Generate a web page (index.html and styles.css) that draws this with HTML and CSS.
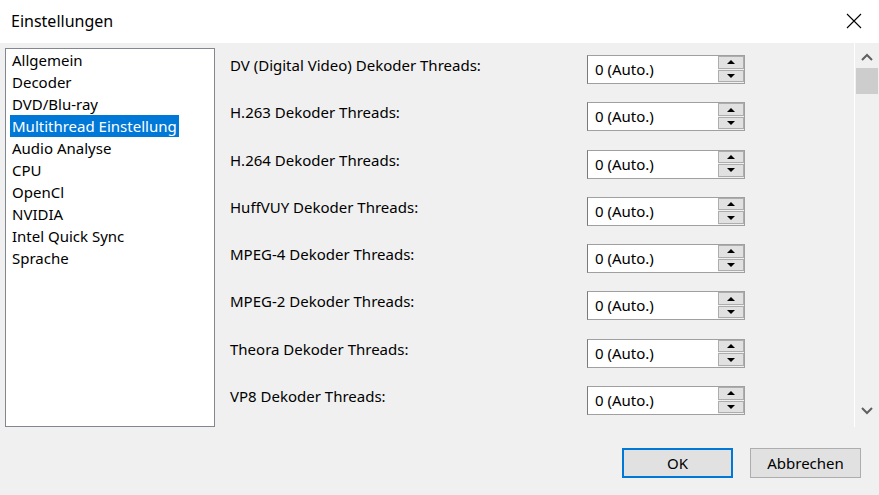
FILE: index.html
```html
<!DOCTYPE html>
<html lang="de">
<head>
  <meta charset="UTF-8">
  <title>Einstellungen</title>
  <link rel="stylesheet" href="styles.css">
</head>
<body>
  <div class="window">
    <div class="titlebar">
      <span class="title">Einstellungen</span>
      <svg class="close" width="16" height="16" viewBox="0 0 16 16">
        <path d="M1 1 L15 15 M15 1 L1 15" stroke="#000" stroke-width="1.1" fill="none"/>
      </svg>
    </div>

    <div class="body">
      <ul class="nav">
        <li><span>Allgemein</span></li>
        <li><span>Decoder</span></li>
        <li><span>DVD/Blu-ray</span></li>
        <li class="active"><span>Multithread Einstellung</span></li>
        <li><span>Audio Analyse</span></li>
        <li><span>CPU</span></li>
        <li><span>OpenCl</span></li>
        <li><span>NVIDIA</span></li>
        <li><span>Intel Quick Sync</span></li>
        <li><span>Sprache</span></li>
      </ul>

      <div class="pane">
        <div class="rows">
          <div class="row">
            <label>DV (Digital Video) Dekoder Threads:</label>
            <div class="spin"><div class="spin-value">0 (Auto.)</div><div class="spin-btns"><span class="up"></span><span class="down"></span></div></div>
          </div>
          <div class="row">
            <label>H.263 Dekoder Threads:</label>
            <div class="spin"><div class="spin-value">0 (Auto.)</div><div class="spin-btns"><span class="up"></span><span class="down"></span></div></div>
          </div>
          <div class="row">
            <label>H.264 Dekoder Threads:</label>
            <div class="spin"><div class="spin-value">0 (Auto.)</div><div class="spin-btns"><span class="up"></span><span class="down"></span></div></div>
          </div>
          <div class="row">
            <label>HuffVUY Dekoder Threads:</label>
            <div class="spin"><div class="spin-value">0 (Auto.)</div><div class="spin-btns"><span class="up"></span><span class="down"></span></div></div>
          </div>
          <div class="row">
            <label>MPEG-4 Dekoder Threads:</label>
            <div class="spin"><div class="spin-value">0 (Auto.)</div><div class="spin-btns"><span class="up"></span><span class="down"></span></div></div>
          </div>
          <div class="row">
            <label>MPEG-2 Dekoder Threads:</label>
            <div class="spin"><div class="spin-value">0 (Auto.)</div><div class="spin-btns"><span class="up"></span><span class="down"></span></div></div>
          </div>
          <div class="row">
            <label>Theora Dekoder Threads:</label>
            <div class="spin"><div class="spin-value">0 (Auto.)</div><div class="spin-btns"><span class="up"></span><span class="down"></span></div></div>
          </div>
          <div class="row">
            <label>VP8 Dekoder Threads:</label>
            <div class="spin"><div class="spin-value">0 (Auto.)</div><div class="spin-btns"><span class="up"></span><span class="down"></span></div></div>
          </div>
        </div>

        <div class="scrollbar">
          <svg class="arrow" width="12" height="8" viewBox="0 0 12 8">
            <path d="M1 7 L6 2 L11 7" stroke="#606060" stroke-width="2" fill="none"/>
          </svg>
          <div class="thumb"></div>
          <div class="track"></div>
          <svg class="arrow" width="12" height="8" viewBox="0 0 12 8">
            <path d="M1 1 L6 6 L11 1" stroke="#606060" stroke-width="2" fill="none"/>
          </svg>
        </div>
      </div>
    </div>

    <div class="footer">
      <button class="btn btn-default">OK</button>
      <button class="btn">Abbrechen</button>
    </div>
  </div>
</body>
</html>
```

FILE: styles.css
```css
body {
  margin: 0;
  font-family: "Noto Sans", "Open Sans", sans-serif;
  font-size: 15px;
  color: #000;
  background: #f0f0f0;
}

.window {
  width: 879px;
  height: 495px;
  display: flex;
  flex-direction: column;
}

.titlebar {
  height: 43px;
  background: #fff;
  display: flex;
  align-items: center;
  justify-content: space-between;
  padding: 0 17px 0 11px;
}

.title {
  font-size: 16px;
  margin-top: -1px;
}

.close {
  margin-top: -1px;
}

.body {
  display: flex;
  height: 384px;
}

.nav {
  list-style: none;
  margin: 5px 0 0 5px;
  padding: 0;
  width: 208px;
  height: 377px;
  background: #fff;
  border: 1px solid #828790;
  box-sizing: content-box;
}

.nav li {
  height: 22px;
  line-height: 22px;
  padding-left: 4px;
}

.nav li span {
  display: inline-block;
  padding: 0 2px;
}

.nav li.active span {
  background: #0078d7;
  color: #fff;
}

.pane {
  flex: 1;
  display: flex;
}

.rows {
  flex: 1;
  padding: 12px 0 0 15px;
}

.row {
  height: 47.3px;
  display: flex;
  align-items: flex-start;
}

.row label {
  width: 357px;
  line-height: 22px;
  margin-top: -1px;
}

.spin {
  display: flex;
  width: 158px;
  height: 29px;
  box-sizing: border-box;
  border: 1px solid #a0a0a0;
  border-left-color: #7a7a7a;
  background: #fff;
}

.spin-value {
  flex: 1;
  line-height: 26px;
  padding-left: 7px;
}

.spin-btns {
  width: 26px;
  display: flex;
  flex-direction: column;
  gap: 1px;
  padding: 0 0 1px;
  background: #f0f0f0;
}

.spin-btns span {
  flex: 1;
  border: 1px solid #adadad;
  background: #e1e1e1;
  display: flex;
  align-items: center;
  justify-content: center;
}

.spin-btns .up::before {
  content: "";
  border-left: 4px solid transparent;
  border-right: 4px solid transparent;
  border-bottom: 4px solid #000;
}

.spin-btns .down::before {
  content: "";
  border-left: 4px solid transparent;
  border-right: 4px solid transparent;
  border-top: 4px solid #000;
}

.scrollbar {
  width: 24px;
  border-left: 1px solid #fff;
  display: flex;
  flex-direction: column;
  align-items: center;
}

.scrollbar .arrow {
  margin: 10px 0 7px;
}

.scrollbar .arrow:last-child {
  margin: 7px 0 12px;
}

.thumb {
  width: 22px;
  height: 26px;
  background: #cdcdcd;
}

.track {
  flex: 1;
}

.footer {
  display: flex;
  justify-content: flex-end;
  gap: 17px;
  padding: 21px 18px 0 0;
}

.btn {
  width: 111px;
  height: 30px;
  font-family: inherit;
  font-size: 15px;
  background: #e1e1e1;
  border: 1px solid #adadad;
  padding: 0;
  margin: 0;
}

.btn-default {
  border: 2px solid #0078d7;
}
```
